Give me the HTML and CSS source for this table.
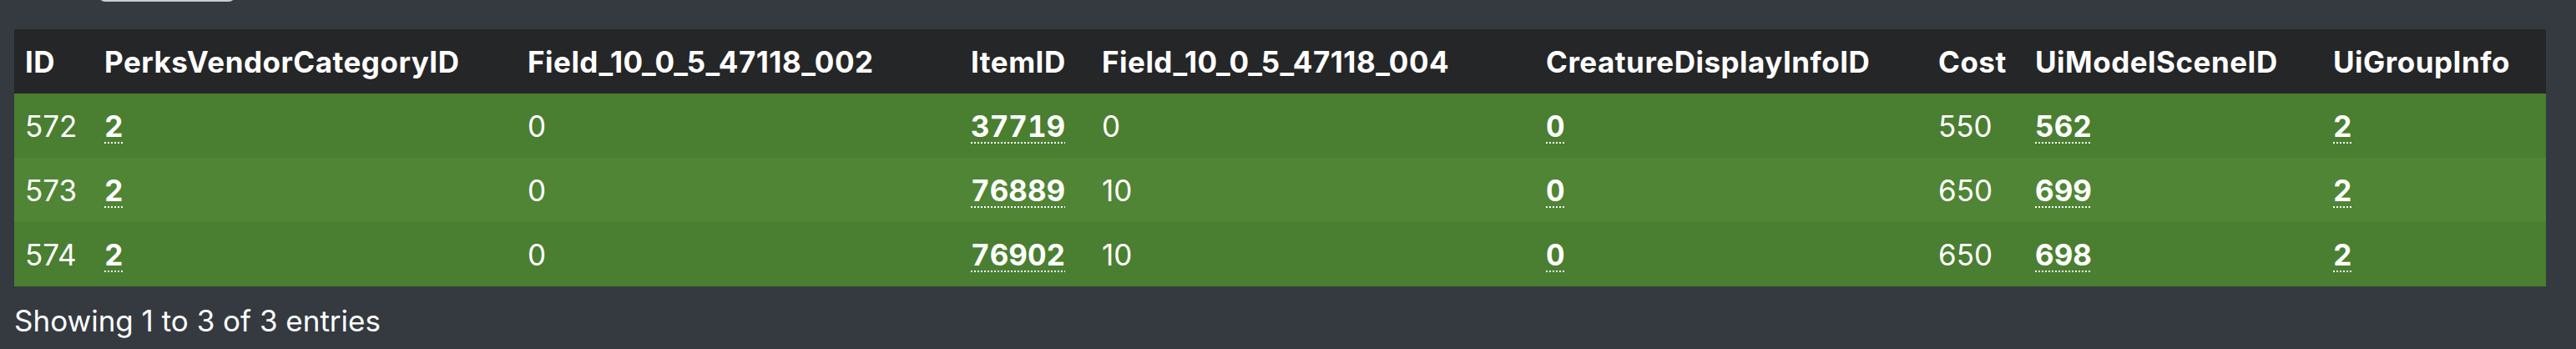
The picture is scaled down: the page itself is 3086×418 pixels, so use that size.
FILE: index.html
```html
<!DOCTYPE html>
<html lang="en">
<head>
<meta charset="utf-8">
<title>PerksVendorItem</title>
<link rel="stylesheet" href="styles.css">
</head>
<body>
<div class="page">
  <div class="length-row"><div class="select-box"></div></div>
  <table class="data-table">
    <colgroup>
      <col class="c-id"><col class="c-perks"><col class="c-f2"><col class="c-item"><col class="c-f4"><col class="c-creature"><col class="c-cost"><col class="c-scene"><col class="c-group">
    </colgroup>
    <thead>
      <tr>
        <th>ID</th><th>PerksVendorCategoryID</th><th>Field_10_0_5_47118_002</th><th>ItemID</th><th>Field_10_0_5_47118_004</th><th>CreatureDisplayInfoID</th><th>Cost</th><th>UiModelSceneID</th><th>UiGroupInfo</th>
      </tr>
    </thead>
    <tbody>
      <tr class="odd">
        <td>572</td><td><a class="fk">2</a></td><td>0</td><td><a class="fk">37719</a></td><td>0</td><td><a class="fk">0</a></td><td>550</td><td><a class="fk">562</a></td><td><a class="fk">2</a></td>
      </tr>
      <tr class="even">
        <td>573</td><td><a class="fk">2</a></td><td>0</td><td><a class="fk">76889</a></td><td>10</td><td><a class="fk">0</a></td><td>650</td><td><a class="fk">699</a></td><td><a class="fk">2</a></td>
      </tr>
      <tr class="odd">
        <td>574</td><td><a class="fk">2</a></td><td>0</td><td><a class="fk">76902</a></td><td>10</td><td><a class="fk">0</a></td><td>650</td><td><a class="fk">698</a></td><td><a class="fk">2</a></td>
      </tr>
    </tbody>
  </table>
  <div class="info">Showing 1 to 3 of 3 entries</div>
</div>
</body>
</html>
```

FILE: styles.css
```css
html, body {
  margin: 0;
  padding: 0;
  background: #343a40;
}
body {
  font-family: Inter, "Noto Sans", "Liberation Sans", sans-serif;
  font-size: 35px;
  color: #ffffff;
  overflow: hidden;
}
.page {
  display: flow-root;
  padding: 0 36px 0 17px;
}
.length-row {
  height: 3px;
  overflow: hidden;
}
.select-box {
  margin-left: 101px;
  margin-top: -39px;
  width: 160px;
  height: 37px;
  border: 2px solid #c9ced3;
  border-radius: 8px;
  background: #343a40;
}
.data-table {
  margin-top: 32px;
  width: 3033px;
  table-layout: fixed;
  border-collapse: collapse;
  border-spacing: 0;
}
.c-id { width: 95px; }
.c-perks { width: 507px; }
.c-f2 { width: 531px; }
.c-item { width: 157px; }
.c-f4 { width: 532px; }
.c-creature { width: 470px; }
.c-cost { width: 116px; }
.c-scene { width: 357px; }
.c-group { width: 268px; }
.data-table th,
.data-table td {
  height: 77px;
  padding: 0 13px;
  text-align: left;
  vertical-align: middle;
  white-space: nowrap;
  box-sizing: border-box;
}
.data-table th {
  background: #252627;
  font-weight: 700;
  letter-spacing: 0.5px;
}
.data-table tr.odd td { background: #4a7e31; }
.data-table tr.even td { background: #4f8535; }
.fk {
  font-weight: 700;
  font-variant-numeric: tabular-nums;
  color: #ffffff;
  text-decoration: underline dotted;
  text-decoration-thickness: 2px;
  text-underline-offset: 7px;
}
.info {
  margin-top: 16px;
  line-height: 51px;
}
```
